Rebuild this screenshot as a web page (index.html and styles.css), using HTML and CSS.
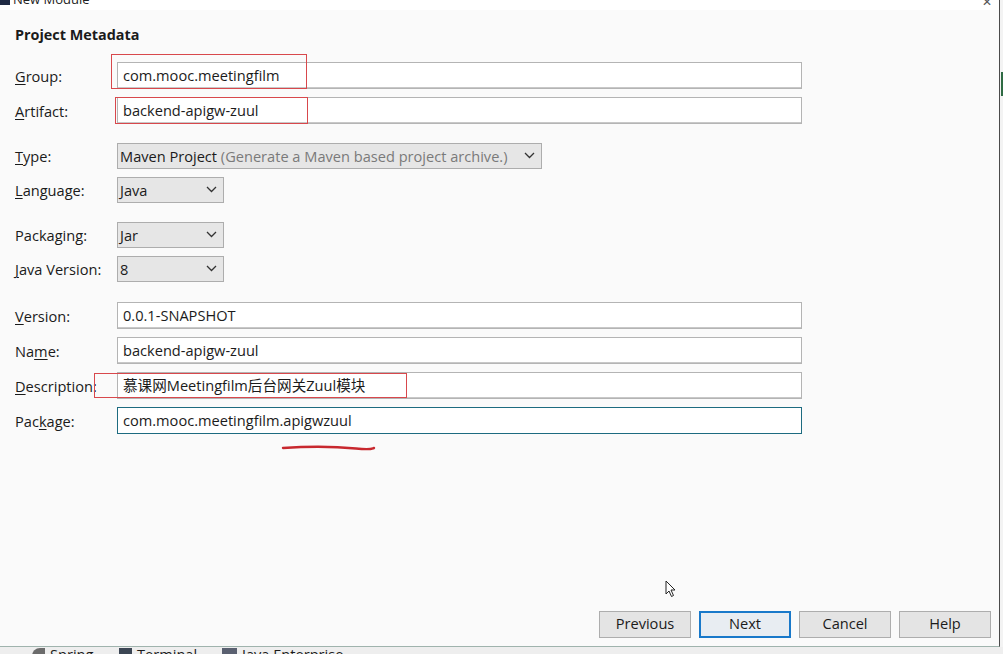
FILE: index.html
```html
<!DOCTYPE html>
<html>
<head>
<meta charset="utf-8">
<link rel="stylesheet" href="styles.css">
</head>
<body>
<div class="screen">
  <div class="main">
    <div class="dialog">
      <div class="titlebar">
        <span class="appicon"></span>
        <span class="title">New Module</span>
        <span class="close">✕</span>
      </div>
      <div class="content">
        <div class="heading">Project Metadata</div>
        <div class="form">
          <div class="row"><label class="lbl"><u>G</u>roup:</label><div class="field">com.mooc.meetingfilm</div></div>
          <div class="row"><label class="lbl"><u>A</u>rtifact:</label><div class="field">backend-apigw-zuul</div></div>

          <div class="row sep"><label class="lbl"><u>T</u>ype:</label>
            <div class="combo wide"><span class="val">Maven Project <span class="hint">(Generate a Maven based project archive.)</span></span>
              <svg class="chev" width="11" height="7" viewBox="0 0 11 7"><polyline points="1,1 5.5,5.5 10,1" fill="none" stroke="#333" stroke-width="1.3"/></svg></div></div>
          <div class="row"><label class="lbl"><u>L</u>anguage:</label>
            <div class="combo"><span class="val">Java</span>
              <svg class="chev" width="11" height="7" viewBox="0 0 11 7"><polyline points="1,1 5.5,5.5 10,1" fill="none" stroke="#333" stroke-width="1.3"/></svg></div></div>

          <div class="row sep"><label class="lbl">Packaging:</label>
            <div class="combo"><span class="val">Jar</span>
              <svg class="chev" width="11" height="7" viewBox="0 0 11 7"><polyline points="1,1 5.5,5.5 10,1" fill="none" stroke="#333" stroke-width="1.3"/></svg></div></div>
          <div class="row"><label class="lbl"><u>J</u>ava Version:</label>
            <div class="combo"><span class="val">8</span>
              <svg class="chev" width="11" height="7" viewBox="0 0 11 7"><polyline points="1,1 5.5,5.5 10,1" fill="none" stroke="#333" stroke-width="1.3"/></svg></div></div>

          <div class="row sep2"><label class="lbl"><u>V</u>ersion:</label><div class="field">0.0.1-SNAPSHOT</div></div>
          <div class="row"><label class="lbl">Na<u>m</u>e:</label><div class="field">backend-apigw-zuul</div></div>
          <div class="row"><label class="lbl"><u>D</u>escription:</label><div class="field">慕课网Meetingfilm后台网关Zuul模块</div></div>
          <div class="row"><label class="lbl">Pac<u>k</u>age:</label><div class="field focus">com.mooc.meetingfilm.apigwzuul</div></div>
        </div>
        <div class="footer">
          <button class="btn">Previous</button>
          <button class="btn default">Next</button>
          <button class="btn">Cancel</button>
          <button class="btn">Help</button>
        </div>
      </div>
      <div class="mark mark-group"></div>
      <div class="mark mark-artifact"></div>
      <div class="mark mark-desc"></div>
      <svg class="underline" width="100" height="10" viewBox="0 0 100 10"><path d="M2 5 C 30 3, 60 4, 75 5.5 S 90 6, 93 5" fill="none" stroke="#c8282e" stroke-width="2.4" stroke-linecap="round"/></svg>
      <svg class="cursor" width="12" height="18" viewBox="0 0 12 18"><path d="M1 1 L1 14 L4 11 L6.5 16.5 L8.5 15.5 L6 10 L10 10 Z" fill="#fff" stroke="#222" stroke-width="1" stroke-linejoin="round"/></svg>
    </div>
    <div class="ide-edge"><span class="green"></span></div>
  </div>
  <div class="toolbar">
    <span class="tw t1"><span class="ic leaf"></span>Spring</span>
    <span class="tw t2"><span class="ic term"></span>Terminal</span>
    <span class="tw t3"><span class="ic ee"></span>Java Enterprise</span>
  </div>
</div>
</body>
</html>
```

FILE: styles.css
```css
html, body {
  margin: 0;
  padding: 0;
}
body {
  width: 1003px;
  height: 654px;
  overflow: hidden;
  background: #f2f2f2;
  font-family: "Open Sans", "Noto Sans CJK SC", sans-serif;
  font-size: 14.6px;
  color: #1b1b1b;
}
.screen {
  display: flex;
  flex-direction: column;
  height: 654px;
}
.main {
  display: flex;
  height: 647px;
}
.dialog {
  position: relative;
  width: 999px;
  height: 646px;
  background: #fafafa;
  border-right: 1px solid #4a4a4a;
  border-bottom: 1px solid #9fb3ad;
  display: flex;
  flex-direction: column;
}
.titlebar {
  height: 10px;
  background: #ffffff;
  overflow: hidden;
  display: flex;
  align-items: flex-end;
  position: relative;
}
.appicon {
  width: 10px;
  height: 5px;
  background: #1f2a44;
  margin-bottom: 5px;
}
.title {
  margin-left: 3px;
  font-size: 13px;
  line-height: 12px;
  margin-bottom: 5px;
  color: #222;
}
.close {
  position: absolute;
  right: 7px;
  top: -7px;
  font-size: 12px;
  color: #555;
}
.content {
  flex: 1;
  display: flex;
  flex-direction: column;
  padding: 15px 8px 8px 15px;
}
.heading {
  font-weight: 700;
  font-size: 14.4px;
  line-height: 20px;
  height: 20px;
}
.form {
  margin-top: 17px;
  display: flex;
  flex-direction: column;
  gap: 8px;
}
.row {
  display: flex;
  align-items: center;
}
.row.sep { margin-top: 11px; }
.row.sep2 { margin-top: 12px; }
.lbl {
  width: 102px;
  flex: none;
  white-space: nowrap;
}
.lbl u {
  text-decoration-thickness: 1px;
  text-underline-offset: 2px;
}
.field {
  box-sizing: border-box;
  width: 685px;
  height: 27px;
  background: #ffffff;
  border: 1px solid #b4b4b4;
  box-shadow: inset 0 -1px 0 #c8c8c8;
  padding: 0 5px;
  line-height: 24px;
  white-space: nowrap;
}
.field.focus {
  border-color: #1d6b80;
  box-shadow: none;
}
.combo {
  box-sizing: border-box;
  width: 107px;
  height: 26px;
  background: #e6e6e6;
  border: 1px solid #adadad;
  display: flex;
  align-items: center;
  justify-content: space-between;
  padding: 0 6px 1px 2px;
  white-space: nowrap;
}
.combo.wide { width: 425px; }
.hint { color: #7a7a7a; }
.chev { flex: none; }
.footer {
  margin-top: auto;
  display: flex;
  justify-content: flex-end;
  gap: 8px;
}
.btn {
  box-sizing: border-box;
  width: 92px;
  height: 27px;
  background: #e4e4e4;
  border: 1px solid #adadad;
  font-family: "Open Sans", sans-serif;
  font-size: 14.6px;
  line-height: 20px;
  color: #1b1b1b;
  padding: 0 0 3px;
}
.btn.default {
  border: 2px solid #1979ca;
  background: #e8edf2;
}
.mark {
  position: absolute;
  border: 1px solid #d8484c;
}
.mark-group { left: 111px; top: 54px; width: 194px; height: 33px; }
.mark-artifact { left: 115px; top: 97px; width: 191px; height: 25px; }
.mark-desc { left: 94px; top: 373px; width: 311px; height: 23px; }
.underline {
  position: absolute;
  left: 281px;
  top: 443px;
}
.cursor {
  position: absolute;
  left: 665px;
  top: 580px;
}
.ide-edge {
  flex: 1;
  background: #f3f3f3;
  position: relative;
}
.green {
  position: absolute;
  left: 1px;
  top: 72px;
  width: 2px;
  height: 24px;
  background: #2f6b44;
}
.toolbar {
  flex: 1;
  background: #eeeeee;
  display: flex;
  overflow: hidden;
  font-size: 14.6px;
  line-height: 14px;
  padding-left: 32px;
}
.tw {
  display: flex;
  align-items: flex-start;
  white-space: nowrap;
  flex: none;
}
.t1 { width: 87px; }
.t2 { width: 103px; }
.ic {
  width: 13px;
  height: 8px;
  margin-right: 5px;
  margin-top: 1px;
  flex: none;
}
.leaf { background: #6b6b6b; border-radius: 8px 0 0 0; }
.term { background: #3c4654; }
.ee { background: #5a6070; width: 15px; }
```
